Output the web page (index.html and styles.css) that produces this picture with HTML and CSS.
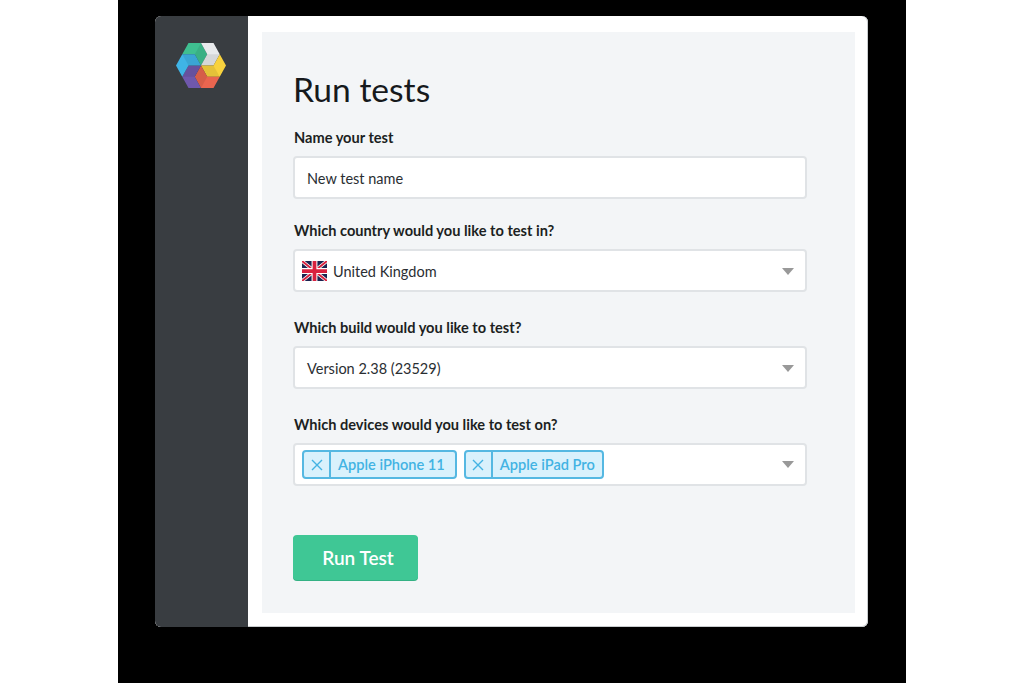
FILE: index.html
```html
<!DOCTYPE html>
<html lang="en">
<head>
<meta charset="utf-8">
<title>Run tests</title>
<link rel="stylesheet" href="styles.css">
</head>
<body>
<div class="stage">
  <div class="app">
    <aside class="sidebar">
      <svg class="logo" viewBox="-25 -22.5 50 45" width="50" height="45" aria-hidden="true">
        <defs>
          <polygon id="piece" points="-12.5,-21.65 0,-21.65 6.25,-10.83 0,0 -6.25,-10.83 -18.75,-10.83"/>
          <polygon id="facet" points="0,-21.65 6.25,-10.83 0,0 -6.25,-10.83"/>
        </defs>
        <g transform="scale(1 1.04)">
          <g class="p-green"><use href="#piece"/><use class="shade" href="#facet"/></g>
          <g class="p-white" transform="rotate(60)"><use href="#piece"/><use class="shade" href="#facet"/></g>
          <g class="p-yellow" transform="rotate(120)"><use href="#piece"/><use class="shade" href="#facet"/></g>
          <g class="p-red" transform="rotate(180)"><use href="#piece"/><use class="shade" href="#facet"/></g>
          <g class="p-purple" transform="rotate(240)"><use href="#piece"/><use class="shade" href="#facet"/></g>
          <g class="p-blue" transform="rotate(300)"><use href="#piece"/><use class="shade" href="#facet"/></g>
        </g>
      </svg>
    </aside>
    <main class="content">
      <div class="panel">
        <h1 class="title">Run tests</h1>
        <div class="field field-first">
          <div class="label">Name your test</div>
          <div class="control control-text">New test name</div>
        </div>
        <div class="field">
          <div class="label">Which country would you like to test in?</div>
          <div class="control control-flag">
            <svg class="flag" viewBox="0 0 60 48" width="25" height="20" aria-hidden="true">
              <rect width="60" height="48" fill="#1b2350"/>
              <path d="M0 0L60 48M60 0L0 48" stroke="#fff" stroke-width="8"/>
              <path d="M0 0L60 48M60 0L0 48" stroke="#d8213f" stroke-width="4.5"/>
              <path d="M30 0V48M0 24H60" stroke="#fff" stroke-width="14"/>
              <path d="M30 0V48M0 24H60" stroke="#d8213f" stroke-width="9"/>
            </svg>
            <span>United Kingdom</span>
            <span class="caret"></span>
          </div>
        </div>
        <div class="field">
          <div class="label">Which build would you like to test?</div>
          <div class="control control-text">
            <span>Version 2.38 (23529)</span>
            <span class="caret"></span>
          </div>
        </div>
        <div class="field">
          <div class="label">Which devices would you like to test on?</div>
          <div class="control control-tags">
            <span class="tag tag-wide"><span class="tag-x"><svg viewBox="0 0 12 12" width="12" height="12" aria-hidden="true"><path d="M1 1L11 11M11 1L1 11"/></svg></span><span class="tag-text">Apple iPhone 11</span></span>
            <span class="tag"><span class="tag-x"><svg viewBox="0 0 12 12" width="12" height="12" aria-hidden="true"><path d="M1 1L11 11M11 1L1 11"/></svg></span><span class="tag-text">Apple iPad Pro</span></span>
            <span class="caret"></span>
          </div>
        </div>
        <button class="run" type="button">Run Test</button>
      </div>
    </main>
  </div>
</div>
</body>
</html>
```
FILE: styles.css
```css
* { box-sizing: border-box; }
html, body { height: 100%; }
body {
  margin: 0;
  background: #fff;
  display: flex;
  justify-content: center;
  font-family: Lato, "Liberation Sans", sans-serif;
  color: #1c1f22;
  overflow: hidden;
}
.stage {
  width: 788px;
  height: 683px;
  background: #000;
  padding: 16px 38px 56px 37px;
}
.app {
  display: flex;
  height: 100%;
  border-radius: 6px;
  overflow: hidden;
  background: #fff;
  box-shadow: inset 0 -1px 0 #c8ccce, inset -1px 0 0 #c8ccce;
}
.sidebar {
  width: 93px;
  flex: none;
  background: #393d41;
  padding: 27px 0 0 21px;
}
.logo { display: block; }
.p-green { fill: #3fbf90; }
.p-white { fill: #e8eaec; }
.p-yellow { fill: #f8d23e; }
.p-red { fill: #e9654f; }
.p-purple { fill: #6f58ac; }
.p-blue { fill: #3fb4e6; }
.shade { fill: #000; fill-opacity: .08; }
.content {
  flex: 1;
  padding: 16px 13px 14px 14px;
  min-width: 0;
}
.panel {
  height: 100%;
  background: #f3f5f7;
  padding: 33px 48px 0 31px;
}
.title {
  margin: 0 0 15px;
  font-size: 33.6px;
  font-weight: 400;
  line-height: 48px;
  color: #16191c;
}
.field { margin-bottom: 26px; }
.field-first { margin-bottom: 22px; }
.label {
  font-size: 14.6px;
  font-weight: 700;
  line-height: 20px;
  margin: 0 0 8px 1px;
  color: #1c1f22;
}
.control {
  height: 43px;
  background: #fff;
  border: 2px solid #e0e3e6;
  border-radius: 4px;
  display: flex;
  align-items: center;
  font-size: 14.5px;
  color: #2a2e32;
}
.control-text { padding: 1px 7px 0 12px; }
.control-flag { padding: 1px 7px 0; gap: 6px; }
.control-tags { padding: 0 7px; gap: 7px; }
.flag { display: block; flex: none; }
.caret {
  margin-left: auto;
  margin-right: 4px;
  width: 0;
  height: 0;
  border-left: 6.5px solid transparent;
  border-right: 6.5px solid transparent;
  border-top: 7px solid #999;
}
.tag {
  display: flex;
  height: 29px;
  background: #d9f1fc;
  border: 2px solid #55b8e2;
  border-radius: 4px;
  color: #42b3e3;
  font-weight: 600;
  font-size: 14.6px;
  align-items: stretch;
}
.tag-x {
  width: 27px;
  border-right: 2px solid #55b8e2;
  display: flex;
  align-items: center;
  justify-content: center;
}
.tag-x path { fill: none; stroke: #42b3e3; stroke-width: 1.4; }
.tag-text {
  padding: 0 7px 0 7px;
  display: flex;
  align-items: center;
}
.tag-wide .tag-text { padding-right: 10px; }
.run {
  display: block;
  width: 125px;
  height: 45px;
  margin-top: 49px;
  padding: 0 0 0 5px;
  border: 0;
  border-radius: 4px;
  background: #3fc795;
  color: #fff;
  font-family: Lato, "Liberation Sans", sans-serif;
  font-size: 19px;
  font-weight: 600;
  box-shadow: 0 1px 0 #34b184;
}
```
